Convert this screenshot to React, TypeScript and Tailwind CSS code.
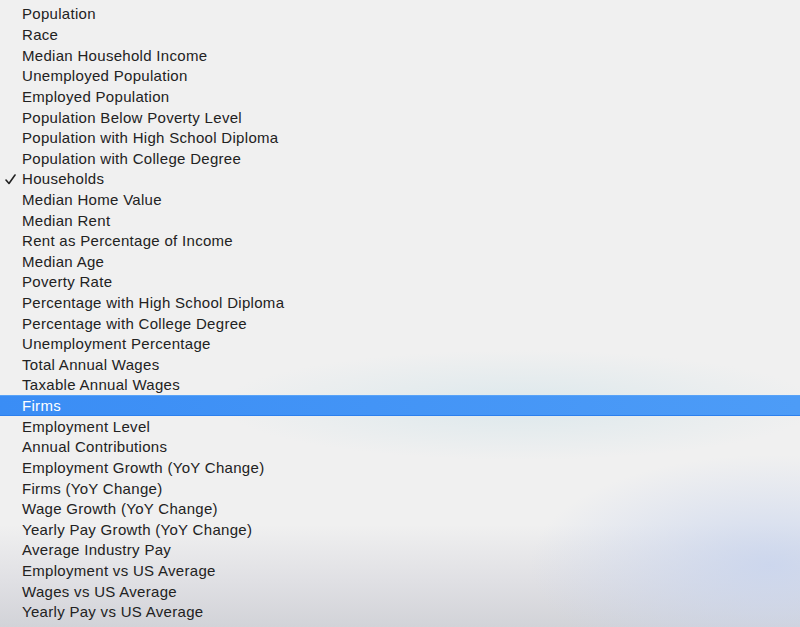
import type React from 'react';

const items = [
  'Population',
  'Race',
  'Median Household Income',
  'Unemployed Population',
  'Employed Population',
  'Population Below Poverty Level',
  'Population with High School Diploma',
  'Population with College Degree',
  'Households',
  'Median Home Value',
  'Median Rent',
  'Rent as Percentage of Income',
  'Median Age',
  'Poverty Rate',
  'Percentage with High School Diploma',
  'Percentage with College Degree',
  'Unemployment Percentage',
  'Total Annual Wages',
  'Taxable Annual Wages',
  'Firms',
  'Employment Level',
  'Annual Contributions',
  'Employment Growth (YoY Change)',
  'Firms (YoY Change)',
  'Wage Growth (YoY Change)',
  'Yearly Pay Growth (YoY Change)',
  'Average Industry Pay',
  'Employment vs US Average',
  'Wages vs US Average',
  'Yearly Pay vs US Average',
];

const checked = 'Households';
const highlighted = 'Firms';

const App: React.FC = () => {
  return (
    <div
      className="relative w-[800px] h-[627px] overflow-hidden bg-[#f0f0f0] font-['Liberation_Sans',Arial,sans-serif]"
      style={{
        backgroundImage:
          'radial-gradient(ellipse 300px 55px at 520px 405px, rgba(210,228,234,0.65), rgba(240,240,240,0) 100%), radial-gradient(ellipse 240px 110px at 770px 565px, rgba(200,212,238,0.85), rgba(240,240,240,0) 100%), linear-gradient(to bottom, rgba(240,240,240,0) 525px, rgba(224,224,228,1) 580px, rgba(210,211,216,1) 627px)',
      }}
    >
      <ul className="pt-[3.7px]">
        {items.map((item) => {
          const isHi = item === highlighted;
          return (
            <li
              key={item}
              className={`relative flex items-center h-[20.62px] pl-[22px] text-[15px] leading-none tracking-[0.3px] ${
                isHi
                  ? 'text-white bg-gradient-to-r from-[#3a8df5] to-[#4d9cf7] border-t border-t-[#58a3f8] border-b border-b-[#2c80ee]'
                  : 'text-[#222222]'
              }`}
            >
              {item === checked && (
                <svg
                  className="absolute left-[5px] top-[5px]"
                  width="11"
                  height="11"
                  viewBox="0 0 11 11"
                  fill="none"
                >
                  <path d="M1 6 L4 9.5 L10 1" stroke="#222" strokeWidth="1.6" strokeLinecap="round" strokeLinejoin="round" />
                </svg>
              )}
              <span>{item}</span>
            </li>
          );
        })}
      </ul>
    </div>
  );
};

export default App;
